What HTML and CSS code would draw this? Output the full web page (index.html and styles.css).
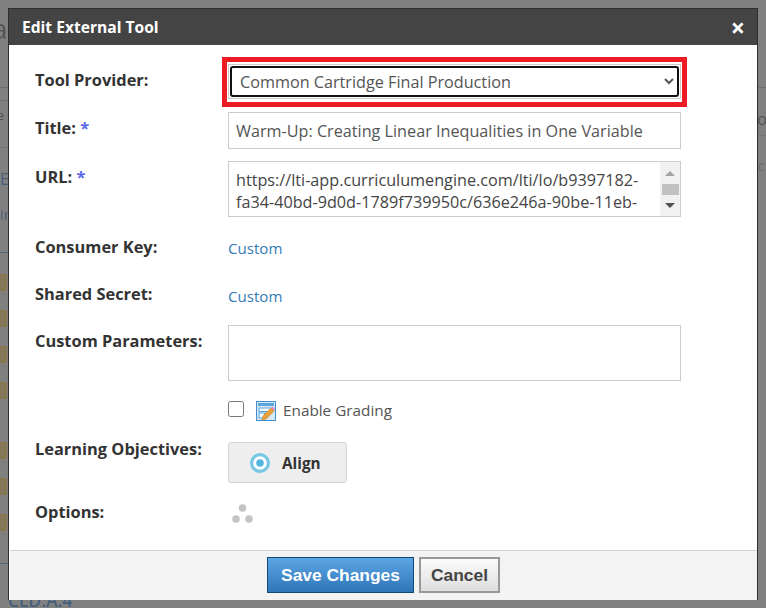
FILE: index.html
```html
<!DOCTYPE html>
<html lang="en">
<head>
<meta charset="utf-8">
<title>Edit External Tool</title>
<link rel="stylesheet" href="styles.css">
</head>
<body>
<div class="backdrop" aria-hidden="true">
  <span class="bg-text bg-a">a</span>
  <span class="bg-line bg-l1"></span>
  <span class="bg-line bg-l2"></span>
  <span class="bg-text bg-e">e</span>
  <span class="bg-line bg-l3"></span>
  <span class="bg-text bg-big">E</span>
  <span class="bg-text bg-ir">ir</span>
  <span class="bg-line bg-blue1"></span>
  <span class="bg-ico bg-i1"></span>
  <span class="bg-ico bg-i2"></span>
  <span class="bg-ico bg-i3"></span>
  <span class="bg-ico bg-i4"></span>
  <span class="bg-ico bg-i5"></span>
  <span class="bg-ico bg-i6"></span>
  <span class="bg-ico bg-i7"></span>
  <span class="bg-line bg-blue2"></span>
  <span class="bg-text bg-cld">CLD.A.4</span>
  <span class="bg-line bg-r1"></span>
  <span class="bg-text bg-or">or</span>
  <span class="bg-line bg-r2"></span>
  <span class="bg-text bg-c">c</span>
</div>

<section class="dialog">
  <header class="titlebar">
    <h1 class="dialog-title">Edit External Tool</h1>
    <span class="close">×</span>
  </header>

  <form class="form">
    <div class="row row-provider">
      <label class="label">Tool Provider:</label>
      <div class="select-wrap">
        <select class="select"><option>Common Cartridge Final Production</option></select>
        <span class="highlight"></span>
      </div>
    </div>

    <div class="row row-title">
      <label class="label">Title: <span class="req">*</span></label>
      <input class="input" type="text" value="Warm-Up: Creating Linear Inequalities in One Variable">
    </div>

    <div class="row row-url">
      <label class="label">URL: <span class="req">*</span></label>
      <div class="url-box">
        <textarea class="url-text">https://lti-app.curriculumengine.com/lti/lo/b9397182-fa34-40bd-9d0d-1789f739950c/636e246a-90be-11eb-a8ed-0242ac110002</textarea>
        <div class="scrollbar">
          <span class="arrow-up"></span>
          <span class="thumb"></span>
          <span class="arrow-down"></span>
        </div>
      </div>
    </div>

    <div class="row row-key">
      <label class="label">Consumer Key:</label>
      <a class="link">Custom</a>
    </div>

    <div class="row row-secret">
      <label class="label">Shared Secret:</label>
      <a class="link">Custom</a>
    </div>

    <div class="row row-params">
      <label class="label">Custom Parameters:</label>
      <textarea class="params"></textarea>
    </div>

    <div class="row row-grading">
      <span class="label"></span>
      <div class="grading">
        <input class="check" type="checkbox">
        <svg class="grade-icon" width="20" height="20" viewBox="0 0 20 20">
          <rect x="0.5" y="0.5" width="19" height="19" fill="#d5e8f6" stroke="#3f8fd0"/>
          <rect x="2" y="2" width="16" height="3" fill="#5aa5de"/>
          <rect x="3" y="7" width="14" height="3.5" fill="#f4fafe" stroke="#5aa5de" stroke-width="1"/>
          <rect x="3" y="12" width="6" height="5" fill="#f4fafe" stroke="#5aa5de" stroke-width="1"/>
          <path d="M6 19 L7 15 L15 7 L18 10 L10 18 Z" fill="#eda13a" stroke="#c07a1e" stroke-width="0.6"/>
          <path d="M15 7 L16.5 5.5 L19.2 8.2 L18 10 Z" fill="#e58bb5"/>
        </svg>
        <span class="grading-text">Enable Grading</span>
      </div>
    </div>

    <div class="row row-align">
      <label class="label">Learning Objectives:</label>
      <button class="align-btn" type="button">
        <svg class="align-icon" width="20" height="20" viewBox="0 0 20 20">
          <circle cx="10" cy="10" r="8.4" fill="#fff" stroke="#76c6e4" stroke-width="3.2"/>
          <circle cx="10" cy="10" r="3.8" fill="#53b5dc"/>
        </svg>
        <span>Align</span>
      </button>
    </div>

    <div class="row row-options">
      <label class="label">Options:</label>
      <svg class="spinner" width="28" height="28" viewBox="0 0 28 28">
        <circle cx="16.5" cy="12" r="3.8" fill="#c4c4c4"/>
        <circle cx="10" cy="23" r="3.8" fill="#c4c4c4"/>
        <circle cx="23" cy="23" r="3.8" fill="#c4c4c4"/>
      </svg>
    </div>
  </form>

  <footer class="footer">
    <button class="btn btn-save" type="button">Save Changes</button>
    <button class="btn btn-cancel" type="button">Cancel</button>
  </footer>
</section>
</body>
</html>
```
FILE: styles.css
```css
* { box-sizing: border-box; }
html, body { margin: 0; height: 608px; overflow: hidden; }
body { position: relative; background: #808080; font-family: "Open Sans", sans-serif; color: #333; }

.backdrop { position: absolute; inset: 0; overflow: hidden; filter: blur(0.6px); }
.bg-text { position: absolute; color: #4a4a4a; font-family: "Open Sans", sans-serif; line-height: 1; }
.bg-line { position: absolute; height: 1px; background: #6e6e6e; }
.bg-ico { position: absolute; left: -2px; width: 9px; height: 17px; background: #857858; border: 1px solid #8a7640; border-radius: 2px; }
.bg-a { left: -8px; top: 14px; font-size: 28px; color: #555; }
.bg-l1 { left: 0; top: 87px; width: 10px; }
.bg-l2 { left: 0; top: 100px; width: 10px; }
.bg-e { left: -3px; top: 109px; font-size: 13px; color: #4d4d4d; }
.bg-l3 { left: 0; top: 147px; width: 10px; background: #757575; }
.bg-big { left: 0; top: 170px; font-size: 17px; color: #4a5f78; }
.bg-ir { left: 0; top: 207px; font-size: 15px; color: #4a5f78; }
.bg-blue1 { left: 0; top: 252px; width: 10px; background: #4a6a8c; }
.bg-i1 { top: 274px; }
.bg-i2 { top: 310px; }
.bg-i3 { top: 346px; }
.bg-i4 { top: 382px; }
.bg-i5 { top: 442px; }
.bg-i6 { top: 478px; }
.bg-i7 { top: 514px; }
.bg-blue2 { left: 0; top: 563px; width: 10px; background: #4a6a8c; }
.bg-cld { left: 8px; top: 592px; font-size: 17.5px; color: #45607e; font-weight: 600; }
.bg-r1 { right: 0; top: 87px; width: 12px; }
.bg-or { left: 757px; top: 110px; font-size: 17px; color: #555; }
.bg-r2 { right: 0; top: 135px; width: 12px; background: #757575; }
.bg-c { left: 758px; top: 158px; font-size: 15px; color: #6a6a6a; }

.dialog {
  position: absolute;
  left: 8px;
  top: 8px;
  width: 750px;
  height: 592px;
  display: flex;
  flex-direction: column;
  background: #fff;
  border: 1px solid #2e2e2e;
  border-bottom: 0;
}

.titlebar {
  height: 36px;
  flex: none;
  display: flex;
  align-items: center;
  justify-content: space-between;
  padding: 0 12px 0 13px;
  background: #444;
  color: #fff;
}
.dialog-title { margin: 0; font-size: 15.6px; font-weight: 700; line-height: 20px; }
.close { font-size: 25px; font-weight: 700; line-height: 20px; }

.form { flex: 1; padding: 19px 0 0 26px; }
.row { display: flex; align-items: flex-start; width: 646px; }
.label { flex: none; width: 193px; padding-top: 6px; font-size: 16.4px; font-weight: 700; line-height: 20px; color: #333; }
.req { color: #5b67e8; }
.row-title { margin-top: 13px; }
.row-url { margin-top: 12px; }
.row-key { margin-top: 14px; }
.row-secret { margin-top: 20px; }
.row-params { margin-top: 19px; }
.row-grading { margin-top: 20px; }
.row-align { margin-top: 22px; }
.row-align .label { padding-top: 0; margin-top: -3px; }
.row-options { margin-top: 13px; }
.row-grading .label { padding-top: 0; }

.select-wrap { position: relative; flex: 1; height: 35px; padding: 1px; border: 1px solid #ccc; background: #fff; }
.select {
  display: block;
  width: 100%;
  height: 31px;
  padding: 0 2px 0 4px;
  border: 2px solid #111;
  border-radius: 3px;
  background: #fff;
  color: #555;
  font: 16.2px "Open Sans", sans-serif;
  outline: 0;
}
.highlight { position: absolute; left: -7px; top: -8px; right: -7px; bottom: -9px; border: 5px solid #ed1c24; pointer-events: none; }

.input, .params, .url-box { flex: 1; border: 1px solid #ccc; background: #fff; }
.input { height: 37px; padding: 0 7px; color: #555; font: 16.2px "Open Sans", sans-serif; outline: 0; }
.params { display: block; height: 56px; resize: none; outline: 0; }

.url-box { display: flex; height: 56px; }
.url-text {
  flex: 1;
  min-width: 0;
  padding: 7px 7px 0;
  border: 0;
  outline: 0;
  resize: none;
  overflow: hidden;
  color: #444;
  font: 16.2px/22px "Open Sans", sans-serif;
}
.scrollbar { flex: none; width: 20px; display: flex; flex-direction: column; align-items: center; justify-content: space-between; padding: 9px 0 8px; background: #f1f1f1; }
.arrow-up { width: 0; height: 0; border: 5px solid transparent; border-top: 0; border-bottom: 5px solid #a3a3a3; }
.thumb { width: 17px; height: 11px; background: #c1c1c1; }
.arrow-down { width: 0; height: 0; border: 5px solid transparent; border-bottom: 0; border-top: 5px solid #505050; }

.link { padding-top: 7px; font-size: 15.1px; line-height: 20px; color: #337ab7; }
.row-secret .link { padding-top: 8px; }

.grading { display: flex; align-items: center; height: 19px; }
.check { width: 16px; height: 16px; margin: 0 12px 3px 0; }
.grade-icon { flex: none; margin-right: 7px; }
.grading-text { font-size: 15.3px; color: #555; line-height: 20px; padding-bottom: 1px; }

.align-btn {
  display: flex;
  align-items: center;
  width: 119px;
  height: 41px;
  padding: 0 0 0 21px;
  border: 1px solid #d4d4d4;
  border-radius: 3px;
  background: #eee;
  color: #333;
  font: 700 15.3px "Open Sans", sans-serif;
}
.align-icon { margin-right: 12px; }
.spinner { margin-left: -2px; }

.footer {
  flex: none;
  height: 50px;
  margin-left: 1px;
  display: flex;
  justify-content: center;
  align-items: flex-start;
  gap: 5px;
  padding: 6px 0 0;
  background: #f3f3f3;
  border-top: 1px solid #d2d2d2;
}
.btn { height: 36px; font: 700 17.4px "Liberation Sans", Arial, sans-serif; padding: 0; }
.btn-save { width: 147px; color: #fff; border: 1px solid #0f4a75; background: linear-gradient(#5ca6e4, #2f75b8); }
.btn-cancel { width: 81px; color: #444; border: 2px solid #999; background: linear-gradient(#fbfbfb, #dedede); }
```
